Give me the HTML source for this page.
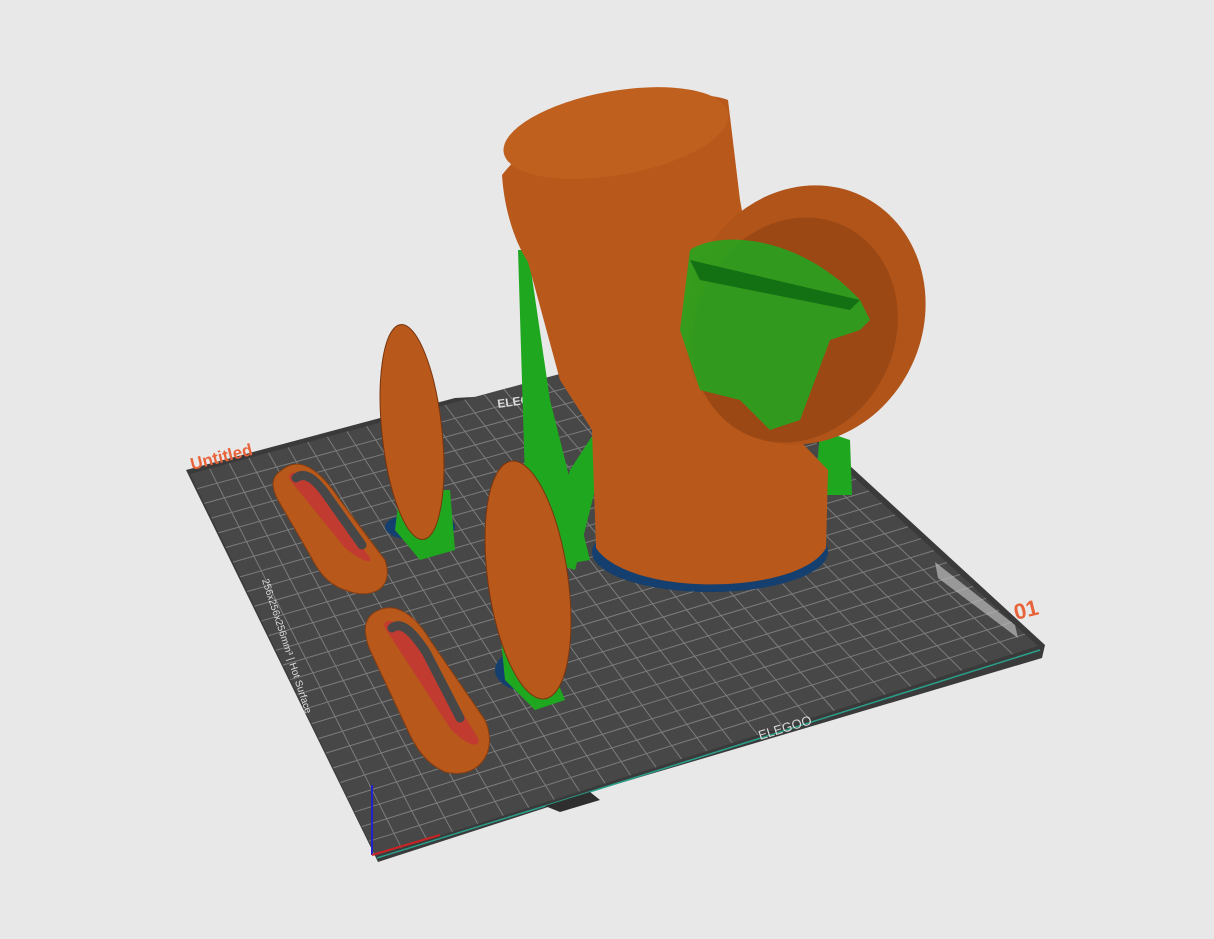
<!DOCTYPE html>
<html><head><meta charset="utf-8"><style>
html,body{margin:0;padding:0;background:#e8e8e8;width:1214px;height:939px;overflow:hidden}
svg{display:block}
</style></head><body>
<svg width="1214" height="939" viewBox="0 0 1214 939" xmlns="http://www.w3.org/2000/svg">
<rect width="1214" height="939" fill="#e8e8e8"/>
<!-- bed -->
<polygon points="186,470 455,398 600,390 702,330 1045,645 1042,658 590,792 545,808 378,862" fill="#3a3a3a"/>
<polygon points="190,474 700,336 1038,646 376,856" fill="#474747"/>
<g id="grid" stroke="#7c7c7c" stroke-width="1"></g>
<polyline points="377,858 545,806 1040,650" fill="none" stroke="#2aa08a" stroke-width="1.5"/>
<polygon points="545,806 590,792 600,800 560,812" fill="#2e2e2e"/>
<text transform="translate(192,470) rotate(-14)" fill="#e8633a" font-family="Liberation Sans,sans-serif" font-size="17" font-weight="bold">Untitled</text>
<text transform="translate(1016,620) rotate(-14)" fill="#e8633a" font-family="Liberation Sans,sans-serif" font-size="22" font-weight="bold">01</text>
<text transform="translate(498,408) rotate(-8)" fill="#ddd" font-family="Liberation Sans,sans-serif" font-size="12" font-weight="bold">ELEGOO</text>
<text transform="translate(760,740) rotate(-17)" fill="#ddd" font-family="Liberation Sans,sans-serif" font-size="13">ELEGOO</text>
<text transform="translate(262,580) rotate(72)" fill="#ddd" font-family="Liberation Sans,sans-serif" font-size="10">256x256x256mm³ | Hot Surface</text>
<polygon points="935,562 1015,625 1018,638 938,578" fill="#bbb" opacity=".7"/>
<line x1="372" y1="855" x2="372" y2="785" stroke="#22c" stroke-width="2"/>
<line x1="372" y1="855" x2="440" y2="835" stroke="#c22" stroke-width="2"/>
<!-- flat loops -->
<g fill="#b8581a" stroke="#8a3e10" stroke-width="1">
<path d="M282,470 C300,455 320,470 340,500 L385,560 C395,590 370,600 345,590 C330,585 320,575 310,555 L278,500 C270,485 272,476 282,470Z"/>
<path d="M375,612 C395,600 415,615 430,640 L485,720 C500,755 475,780 445,772 C430,765 420,755 410,735 L370,650 C362,630 365,618 375,612Z"/>
</g>
<path d="M290,480 L345,548 C360,560 372,565 370,558 L320,490 C305,470 285,468 290,480Z" fill="#c23b30"/>
<path d="M385,628 L450,728 C465,745 482,750 478,738 L420,645 C405,620 380,615 385,628Z" fill="#c23b30"/>
<path d="M296,478 C306,470 318,482 330,500 L362,545" fill="none" stroke="#474747" stroke-width="9" stroke-linecap="round"/>
<path d="M392,628 C402,620 414,634 426,652 L460,718" fill="none" stroke="#474747" stroke-width="9" stroke-linecap="round"/>
<!-- bases -->
<ellipse cx="420" cy="527" rx="35" ry="14" fill="#153f6e"/>
<ellipse cx="530" cy="670" rx="35" ry="22" fill="#153f6e"/>
<ellipse cx="710" cy="552" rx="118" ry="40" fill="#153f6e"/>
<!-- green supports -->
<g fill="#1fa81f">
<path d="M518,250 L528,250 L550,400 L590,560 L560,565 L525,480Z"/>
<path d="M632,375 L640,380 L600,470 L575,570 L545,560 L570,470Z"/>
<path d="M820,430 L850,440 L852,495 L815,495Z"/>
<path d="M400,490 L450,490 L455,550 L420,560 L395,530Z"/>
<path d="M500,630 L540,640 L565,700 L535,710 L505,680Z"/>
</g>
<!-- tall ovals -->
<g fill="#b8581a" stroke="#7a3510" stroke-width="1">
<ellipse cx="412" cy="432" rx="30" ry="108" transform="rotate(-6 412 432)"/>
<ellipse cx="528" cy="580" rx="40" ry="120" transform="rotate(-8 528 580)"/>
</g>
<!-- big cylinder -->
<path d="M502,175 C505,220 520,250 528,262 L560,380 L592,430 L596,548 C630,598 800,595 826,548 L828,470 L780,420 L740,200 L728,100 C690,85 560,100 502,175Z" fill="#b8581a"/>
<ellipse cx="616" cy="133" rx="114" ry="42" transform="rotate(-10 616 133)" fill="#c0601f"/>
<!-- side opening -->
<ellipse cx="805" cy="315" rx="118" ry="132" transform="rotate(25 805 315)" fill="#b0541a"/>
<ellipse cx="795" cy="330" rx="100" ry="115" transform="rotate(25 795 330)" fill="#9c4814"/>
<path d="M690,250 C720,230 800,235 860,300 L870,320 L860,330 L830,340 L800,420 L770,430 L740,400 L700,390 L680,330Z" fill="#1fa81f" opacity=".85"/>
<path d="M690,260 L860,300 L850,310 L700,280Z" fill="#137013"/>
</svg>
<script>
(function(){var g=document.getElementById('grid');var A=[190,474],B=[700,336],C=[1038,646],D=[376,856];
function L(p,q,t){return[p[0]+(q[0]-p[0])*t,p[1]+(q[1]-p[1])*t]}
var n=26,s='';for(var i=1;i<n;i++){var t=i/n;var p=L(A,B,t),q=L(D,C,t);s+='<line x1="'+p[0]+'" y1="'+p[1]+'" x2="'+q[0]+'" y2="'+q[1]+'"/>';
p=L(A,D,t);q=L(B,C,t);s+='<line x1="'+p[0]+'" y1="'+p[1]+'" x2="'+q[0]+'" y2="'+q[1]+'"/>';}
g.innerHTML=s;})();
</script>
</body></html>
